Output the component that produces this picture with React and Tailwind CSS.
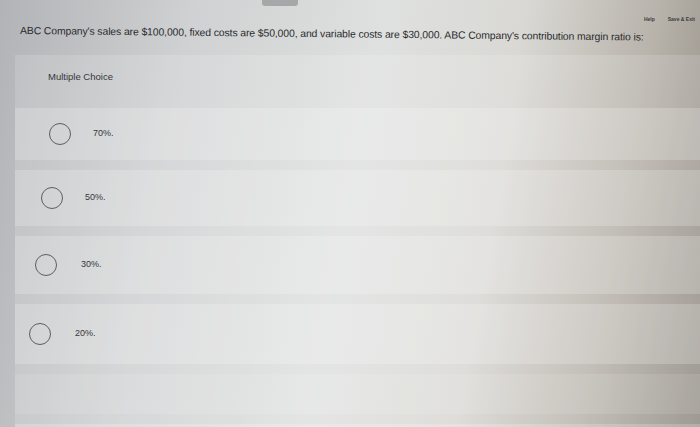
import React from 'react';

const options = [
  { label: '70%.', ml: 'ml-[34px]', gap: 'gap-[22px]', h: 'h-[52px]' },
  { label: '50%.', ml: 'ml-[26px]', gap: 'gap-[22px]', h: 'h-[56px]' },
  { label: '30%.', ml: 'ml-[20px]', gap: 'gap-[24px]', h: 'h-[58px]' },
  { label: '20%.', ml: 'ml-[14px]', gap: 'gap-[24px]', h: 'h-[60px]' },
];

function Radio() {
  return <span className="block w-[22px] h-[22px] rounded-full border-[1.5px] border-[#5d5e60] shrink-0" />;
}

export default function App() {
  return (
    <div
      className="relative w-[700px] h-[427px] overflow-hidden bg-[linear-gradient(100deg,#b2b3b6_0%,#cfd1d2_25%,#dfe1e0_50%,#d9d8d4_68%,#b8b3ab_85%,#8e8880_100%)] text-[#2a2b2e]"
      style={{ fontFamily: '"Liberation Sans", Arial, sans-serif' }}
    >
      {/* top tab */}
      <div className="flex justify-center">
        <div className="w-[36px] h-[6px] ml-[-140px] rounded-b-[3px] bg-[#a6a7a9]" />
      </div>

      {/* header links */}
      <div className="flex justify-end items-center gap-[13px] pr-[5px] mt-[10px] text-[5px] font-bold text-[#3b3c3f]">
        <span>Help</span>
        <span>Save &amp; Exit</span>
      </div>

      {/* question */}
      <p className="ml-[20px] mt-[1px] text-[10.4px] leading-[12px] tracking-[-0.1px] rotate-[0.6deg] origin-left whitespace-nowrap">
        ABC Company's sales are $100,000, fixed costs are $50,000, and variable costs are $30,000. ABC Company's contribution margin ratio is:
      </p>

      {/* multiple choice panel */}
      <div className="mt-[18px] ml-[15px] bg-[#ffffff]/15">
        <div className="h-[53px] pl-[33px] pt-[15px] text-[9.5px] text-[#35363a]">Multiple Choice</div>
        <div className="flex flex-col gap-[10px]">
          {options.map((o) => (
            <div key={o.label} className={`${o.h} flex items-center bg-[#ffffff]/20`}>
              <div className={`flex items-center ${o.ml} ${o.gap}`}>
                <Radio />
                <span className="text-[9px] text-[#35363a]">{o.label}</span>
              </div>
            </div>
          ))}
          <div className="h-[40px] bg-[#ffffff]/10" />
          <div className="h-[30px] bg-[#ffffff]/20" />
        </div>
      </div>
    </div>
  );
}
